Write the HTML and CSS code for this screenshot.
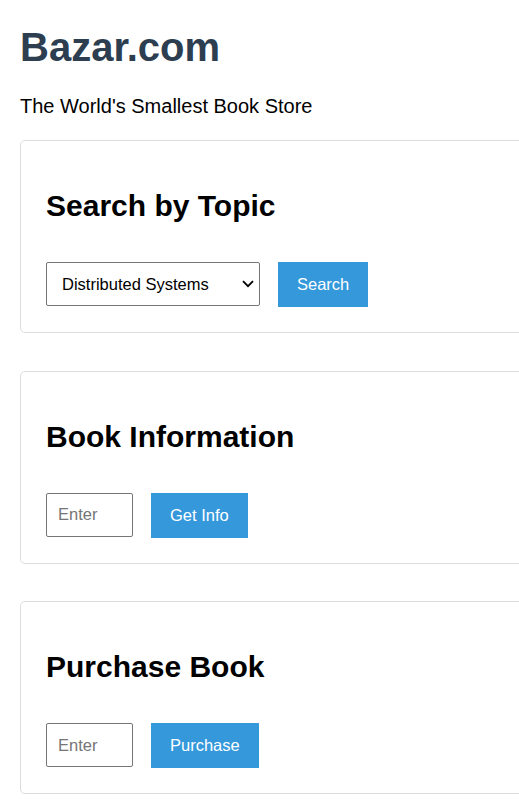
FILE: index.html
```html
<!DOCTYPE html>
<html lang="en">
<head>
<meta charset="utf-8">
<title>Bazar.com</title>
<link rel="stylesheet" href="styles.css">
</head>
<body>
<header class="header">
  <h1 class="title">Bazar.com</h1>
  <p class="tagline">The World's Smallest Book Store</p>
</header>
<main class="cards">
  <section class="card">
    <h2 class="card-title">Search by Topic</h2>
    <div class="row">
      <select class="select">
        <option>Distributed Systems</option>
        <option>Undergraduate School</option>
      </select>
      <button class="btn">Search</button>
    </div>
  </section>
  <section class="card">
    <h2 class="card-title">Book Information</h2>
    <div class="row">
      <input class="field" type="text" placeholder="Enter">
      <button class="btn">Get Info</button>
    </div>
  </section>
  <section class="card">
    <h2 class="card-title">Purchase Book</h2>
    <div class="row">
      <input class="field" type="text" placeholder="Enter">
      <button class="btn">Purchase</button>
    </div>
  </section>
</main>
</body>
</html>
```
FILE: styles.css
```css
html, body {
  overflow-x: hidden;
}
body {
  margin: 0;
  padding: 0 20px;
  font-family: "Liberation Sans", Arial, sans-serif;
  background: #fff;
  color: #000;
}
.header {
  padding-top: 20px;
}
.title {
  margin: 0;
  font-size: 40px;
  line-height: 54px;
  color: #2c3e50;
  font-weight: bold;
}
.tagline {
  margin: 21px 0 0;
  font-size: 20px;
  line-height: 23px;
}
.cards {
  display: flex;
  flex-direction: column;
  gap: 37.5px;
  width: 760px;
  margin-top: 22px;
}
.card {
  border: 1px solid #ddd;
  border-radius: 5px;
  padding: 25px;
}
.card-title {
  margin: 20px 0 0;
  font-size: 30px;
  line-height: 40px;
}
.row {
  display: flex;
  align-items: flex-start;
  gap: 18px;
  margin-top: 36px;
}
.select {
  appearance: none;
  -webkit-appearance: none;
  width: 214px;
  height: 44px;
  font-family: inherit;
  font-size: 16.5px;
  padding: 0 30px 0 15px;
  border: 1px solid #767676;
  border-radius: 2px;
  background-color: #fff;
  background-image: url("data:image/svg+xml,%3Csvg xmlns='http://www.w3.org/2000/svg' width='12' height='8' viewBox='0 0 12 8'%3E%3Cpath d='M1 1.2 L6 6.2 L11 1.2' fill='none' stroke='%23000' stroke-width='1.8'/%3E%3C/svg%3E");
  background-repeat: no-repeat;
  background-position: right 5px center;
  background-size: 12px 8px;
  color: #000;
}
.field {
  box-sizing: border-box;
  width: 87px;
  height: 44px;
  font-family: inherit;
  font-size: 16.5px;
  padding: 0 11px;
  border: 1px solid #767676;
  border-radius: 2px;
}
.field::placeholder {
  color: #757575;
}
.btn {
  height: 45px;
  padding: 0 19px;
  border: none;
  background: #3498db;
  color: #fff;
  font-family: inherit;
  font-size: 16.5px;
  cursor: pointer;
}
```
